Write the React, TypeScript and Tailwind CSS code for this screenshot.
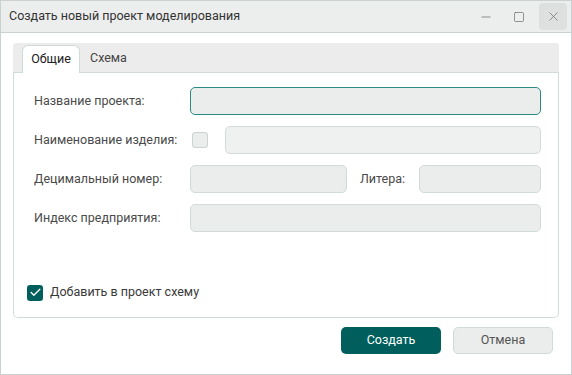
import { Minus, Square, X, Check } from 'lucide-react';

function Field({ className = '', focused = false }: { className?: string; focused?: boolean }) {
  return (
    <div
      className={`h-[28px] rounded-[5px] border ${
        focused ? 'border-[#2a8a84] bg-[#ebedec]' : 'border-[#d3dbda] bg-[#ebedec]'
      } ${className}`}
    />
  );
}

export default function App() {
  return (
    <div
      className="w-[572px] h-[375px] flex flex-col bg-white border border-[#c9d2d1] text-[12.5px] text-[#4a4a4a]"
      style={{ fontFamily: 'Roboto, "Noto Sans", sans-serif' }}
    >
      {/* Title bar */}
      <div className="h-[32px] shrink-0 flex items-center bg-[#eceeed] border-b border-[#c9d2d1] pl-2">
        <span className="flex-1 text-[#333]">Создать новый проект моделирования</span>
        <div className="flex items-center h-full">
          <div className="w-[30px] flex justify-center text-[#555]">
            <Minus size={14} strokeWidth={1.1} />
          </div>
          <div className="w-[30px] flex justify-center text-[#555] ml-[3px]">
            <Square size={12} strokeWidth={1.2} />
          </div>
          <div className="w-[28px] h-[27px] ml-[5px] mr-[4px] rounded-[4px] bg-[#dde0df] flex items-center justify-center text-[#666]">
            <X size={15} strokeWidth={1.1} />
          </div>
        </div>
      </div>

      {/* Body */}
      <div className="flex-1 flex flex-col px-[12px] pt-[10px] pb-[19px]">
        {/* Tabs */}
        <div className="h-[30px] shrink-0 flex items-end bg-[#ececec] rounded-t-[3px] pl-[9px] border-b border-[#d3dbda]">
          <div className="relative -mb-px h-[28px] w-[58px] bg-white border border-b-0 border-[#d3dbda] rounded-t-[6px] flex items-center justify-center text-[#222]">
            Общие
          </div>
          <div className="h-[27px] flex items-center px-[10px] text-[#444]">Схема</div>
        </div>

        {/* Panel */}
        <div className="h-[245px] shrink-0 flex flex-col border border-t-0 border-[#d3dbda] rounded-b-[5px] pl-[20px] pr-[17px] pt-[14px] pb-[15px]">
          <div className="flex flex-col gap-[11px]">
            <div className="flex items-center">
              <span className="w-[156px] shrink-0">Название проекта:</span>
              <Field className="flex-1" focused />
            </div>
            <div className="flex items-center">
              <span className="w-[156px] shrink-0">Наименование изделия:</span>
              <div className="ml-[2px] w-[16px] h-[16px] rounded-[3px] border border-[#cbd3d2] bg-[#ebedec]" />
              <Field className="flex-1 ml-[17px] bg-[#eff1f0]" />
            </div>
            <div className="flex items-center">
              <span className="w-[156px] shrink-0">Децимальный номер:</span>
              <Field className="w-[157px]" />
              <span className="ml-[13px] w-[59px]">Литера:</span>
              <Field className="flex-1" />
            </div>
            <div className="flex items-center">
              <span className="w-[156px] shrink-0">Индекс предприятия:</span>
              <Field className="flex-1" />
            </div>
          </div>

          <div className="mt-auto flex items-center -ml-[7px] gap-[7px]">
            <div className="w-[16px] h-[16px] rounded-[3px] bg-[#005f5c] flex items-center justify-center text-white">
              <Check size={13} strokeWidth={2.4} />
            </div>
            <span className="text-[#3a3a3a]">Добавить в проект схему</span>
          </div>
        </div>

        {/* Buttons */}
        <div className="mt-[9px] flex justify-end gap-[12px] pr-[6px]">
          <button className="w-[100px] h-[27px] rounded-[5px] bg-[#005f5c] text-white text-[12.5px]">
            Создать
          </button>
          <button className="w-[100px] h-[27px] rounded-[5px] bg-[#ebedec] border border-[#d3dbda] text-[#555] text-[12.5px]">
            Отмена
          </button>
        </div>
      </div>
    </div>
  );
}
